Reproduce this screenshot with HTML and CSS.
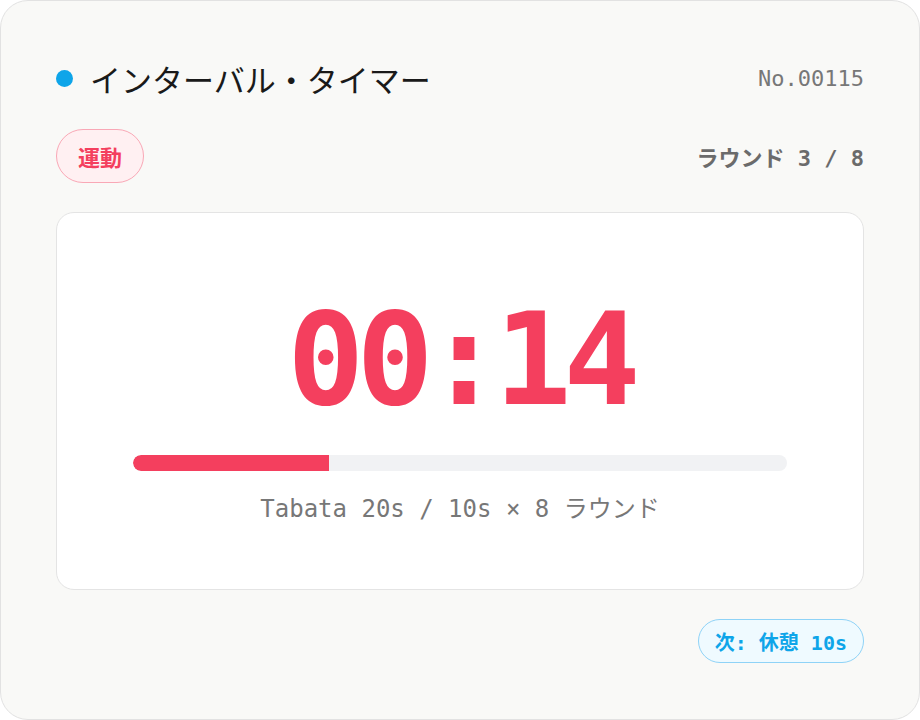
FILE: index.html
```html
<!DOCTYPE html>
<html lang="ja">
<head>
  <meta charset="UTF-8">
  <meta name="viewport" content="width=device-width, initial-scale=1.0">
  <title>インターバル・タイマー</title>
  <link rel="stylesheet" href="styles.css">
</head>
<body>

  <div class="card">
    <div class="card-header">
      <h1 class="title"><span class="dot"></span>インターバル・タイマー</h1>
      <span class="serial">No.00115</span>
    </div>

    <div class="meta-row">
      <span class="tag">運動</span>
      <span class="round">ラウンド 3 / 8</span>
    </div>

    <div class="timer-panel">
      <div class="time">00:14</div>
      <div class="progress">
        <div class="progress-fill" style="width: 30%"></div>
      </div>
      <p class="caption">Tabata 20s / 10s × 8 ラウンド</p>
    </div>

    <div class="card-footer">
      <span class="next">次: 休憩 10s</span>
    </div>
  </div>

</body>
</html>
```

FILE: styles.css
```css
body {
  margin: 0;
  background-color: #fff;
  font-family: 'Noto Sans CJK JP', sans-serif;
}

.card {
  box-sizing: border-box;
  width: 920px;
  height: 720px;
  padding: 55px 55px 56px;
  background-color: #f9f9f7;
  border: 1px solid #e2e2e2;
  border-radius: 28px;
  display: flex;
  flex-direction: column;
  gap: 29px;
}

.card-header,
.meta-row,
.card-footer {
  display: flex;
  align-items: center;
  justify-content: space-between;
}

.card-header {
  height: 44px;
}

.title {
  margin: 0;
  display: flex;
  align-items: center;
  gap: 17px;
  font-size: 31px;
  font-weight: 400;
  color: #1a1a1a;
}

.dot {
  width: 17px;
  height: 17px;
  border-radius: 50%;
  background-color: #0ea5e9;
}

.serial {
  font-family: 'DejaVu Sans Mono', 'Noto Sans CJK JP', monospace;
  font-size: 22px;
  color: #777;
}

.meta-row {
  height: 54px;
}

.tag {
  box-sizing: border-box;
  height: 54px;
  padding: 0 21px;
  display: flex;
  align-items: center;
  border: 1px solid #f9a8b6;
  border-radius: 27px;
  background-color: #fff0f2;
  color: #f43f5e;
  font-size: 22px;
  font-weight: 700;
}

.round {
  font-family: 'DejaVu Sans Mono', 'Noto Sans CJK JP', monospace;
  font-size: 22px;
  font-weight: 700;
  color: #6b6b6b;
}

.timer-panel {
  flex: 1;
  display: flex;
  flex-direction: column;
  align-items: center;
  justify-content: center;
  padding: 0 76px 3px;
  background-color: #fff;
  border: 1px solid #e4e4e4;
  border-radius: 18px;
}

.time {
  margin-top: 20px;
  font-family: 'DejaVu Sans Mono', monospace;
  font-size: 128px;
  font-weight: 700;
  letter-spacing: -8px;
  line-height: 1;
  color: #f43f5e;
}

.progress {
  width: 100%;
  height: 16px;
  margin-top: 31px;
  background-color: #f1f2f4;
  border-radius: 8px;
  overflow: hidden;
}

.progress-fill {
  height: 100%;
  background-color: #f43f5e;
  border-radius: 8px 0 0 8px;
}

.caption {
  margin: 18px 0 0;
  font-family: 'DejaVu Sans Mono', 'Noto Sans CJK JP', monospace;
  font-size: 24px;
  color: #777;
}

.card-footer {
  height: 44px;
  justify-content: flex-end;
}

.next {
  box-sizing: border-box;
  height: 44px;
  padding: 0 16px;
  display: flex;
  align-items: center;
  border: 1px solid #8fd3f7;
  border-radius: 22px;
  background-color: #effaff;
  color: #0ea5e9;
  font-family: 'DejaVu Sans Mono', 'Noto Sans CJK JP', monospace;
  font-size: 20px;
  font-weight: 700;
}
```
